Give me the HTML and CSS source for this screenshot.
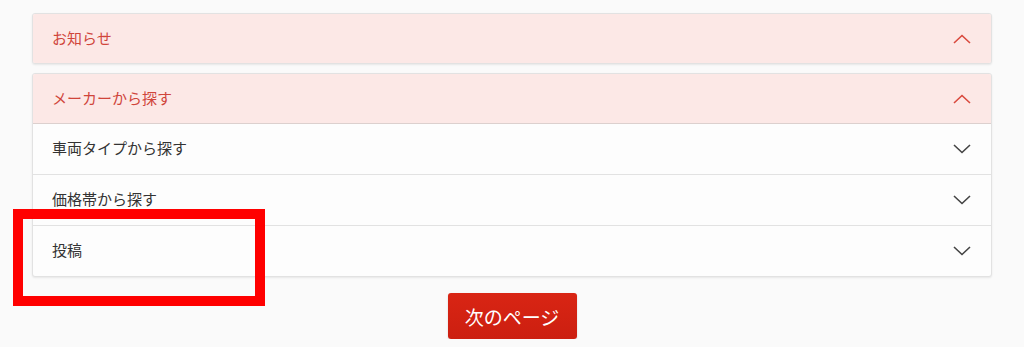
FILE: index.html
```html
<!DOCTYPE html>
<html lang="ja">
<head>
<meta charset="utf-8">
<link rel="stylesheet" href="styles.css">
</head>
<body>
<div class="page">
  <div class="card">
    <div class="row head">
      <span class="label">お知らせ</span>
      <svg class="chev" viewBox="0 0 18 10" width="18" height="10"><path d="M1 9 L9 1.5 L17 9" fill="none" stroke="currentColor" stroke-width="1.6"/></svg>
    </div>
  </div>
  <div class="card">
    <div class="row head">
      <span class="label">メーカーから探す</span>
      <svg class="chev" viewBox="0 0 18 10" width="18" height="10"><path d="M1 9 L9 1.5 L17 9" fill="none" stroke="currentColor" stroke-width="1.6"/></svg>
    </div>
    <div class="row">
      <span class="label">車両タイプから探す</span>
      <svg class="chev" viewBox="0 0 18 10" width="18" height="10"><path d="M1 1 L9 8.5 L17 1" fill="none" stroke="currentColor" stroke-width="1.6"/></svg>
    </div>
    <div class="row">
      <span class="label">価格帯から探す</span>
      <svg class="chev" viewBox="0 0 18 10" width="18" height="10"><path d="M1 1 L9 8.5 L17 1" fill="none" stroke="currentColor" stroke-width="1.6"/></svg>
    </div>
    <div class="row">
      <span class="label">投稿</span>
      <svg class="chev" viewBox="0 0 18 10" width="18" height="10"><path d="M1 1 L9 8.5 L17 1" fill="none" stroke="currentColor" stroke-width="1.6"/></svg>
    </div>
  </div>
  <div class="actions">
    <a class="next">次のページ</a>
  </div>
</div>
<div class="mark"></div>
</body>
</html>
```
FILE: styles.css
```css
html, body {
  margin: 0;
  padding: 0;
  background: #fafafa;
  font-family: "Noto Sans CJK JP", "Noto Sans", sans-serif;
}
.page {
  width: 960px;
  padding: 13px 0 0 32px;
  display: flex;
  flex-direction: column;
  gap: 9px;
}
.card {
  background: #fdfdfd;
  border: 1px solid #e2e2e2;
  border-radius: 3px;
  box-shadow: 0 1px 2px rgba(0,0,0,0.08);
  overflow: hidden;
}
.row {
  height: 50px;
  display: flex;
  align-items: center;
  justify-content: space-between;
  padding: 0 20px 0 19px;
  font-size: 15px;
  color: #333;
  border-top: 1px solid #e2e2e2;
}
.label {
  line-height: 20px;
  padding-bottom: 2px;
}
.row:first-child {
  border-top: none;
  height: 49px;
}
.card .row + .row { height: 50px; }
.head {
  background: #fce8e6;
  color: #d0453b;
}
.head + .row { border-top: 1px solid #dcd0ce; }
.chev { color: #444; }
.head .chev { color: #d94a3e; }
.actions {
  display: flex;
  justify-content: center;
  padding-top: 7px;
}
.next {
  width: 129px;
  height: 46px;
  box-sizing: border-box;
  display: flex;
  align-items: center;
  justify-content: center;
  background: linear-gradient(#d92514, #cc1f10);
  color: #fff;
  font-size: 19px;
  border-radius: 3px;
  box-shadow: 0 1px 2px rgba(0,0,0,0.15);
}
.mark {
  position: absolute;
  left: 13px;
  top: 209px;
  width: 252px;
  height: 97px;
  box-sizing: border-box;
  border: 10px solid #ff0000;
}
```
